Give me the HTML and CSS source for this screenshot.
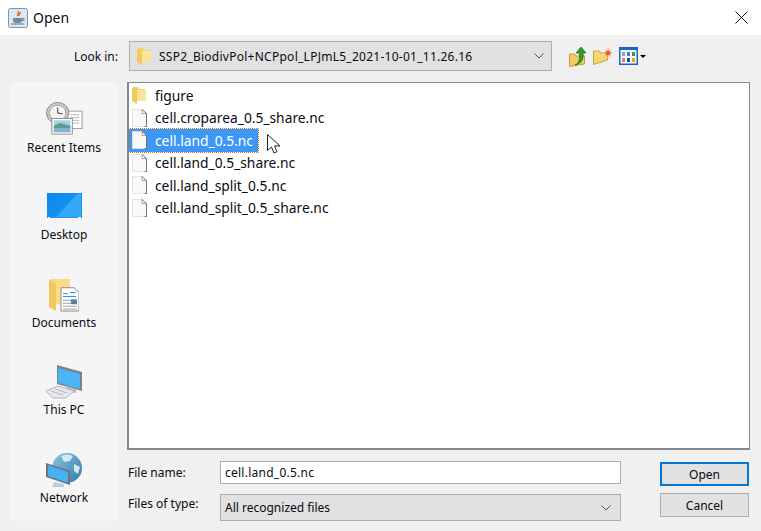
FILE: index.html
```html
<!DOCTYPE html>
<html lang="en">

<head>
  <meta charset="UTF-8" />
  <title>Open</title>
  <link rel="stylesheet" href="styles.css">
</head>

<body>
  <svg class="defs" width="0" height="0">
    <symbol id="page" viewBox="0 0 15 20" preserveAspectRatio="none">
      <path d="M.5.5h9.5l4.500 4.500v14.500h-14z" fill="#f9f9f9" stroke="#e2e2e2" />
      <path d="M10 .5v4.500h4.500" fill="#fff" stroke="#a0a0a0" />
      <path d="M10 .5l4.500 4.500v14.500h-2" fill="none" stroke="#6f6f6f" />
    </symbol>
    <symbol id="folder" viewBox="0 0 14 17">
      <path d="M1 0h5l1 2h6v12H1z" fill="#f5cf68" />
      <path d="M5 3h9v11H5z" fill="#fbe49d" />
      <path d="M0 1l5 2v14L0 14z" fill="#f3c95c" />
    </symbol>
    <linearGradient id="desk" x1="0" y1="0" x2="1" y2="1">
      <stop offset="0" stop-color="#0a86ea" />
      <stop offset="1" stop-color="#1c9cf5" />
    </linearGradient>
    <linearGradient id="globe" x1="0" y1="0" x2="1" y2="1">
      <stop offset="0" stop-color="#8fc4e0" />
      <stop offset="1" stop-color="#2f7aa8" />
    </linearGradient>
  </svg>

  <div class="dialog">
    <div class="titlebar">
      <div class="title_left">
        <svg class="java_icon" width="20" height="20" viewBox="0 0 20 20">
          <rect x=".5" y=".5" width="19" height="19" rx="2" fill="#dfe7ee" stroke="#7d93a8" />
          <path d="M10 3c2 2-2 3 0 5M12 4c1 2-2 2-1 4" fill="none" stroke="#d9642a" stroke-width="1.300" />
          <path d="M5 10h9v2q0 3-3 3H8q-3 0-3-3z" fill="#6f8ca6" />
          <path d="M14 10.500h2v2h-2M3 16h13" fill="none" stroke="#5b7890" />
        </svg>
        <span>Open</span>
      </div>
      <svg class="close_icon" width="13" height="13" viewBox="0 0 13 13">
        <path d="M.5.5l12 12M12.500.5l-12 12" stroke="#111" fill="none" />
      </svg>
    </div>

    <div class="content">
      <div class="look_row">
        <label class="look_label">Look in:</label>
        <div class="combo look_combo">
          <svg class="combo_folder" width="14" height="17"><use href="#folder" /></svg>
          <span class="look_text">SSP2_BiodivPol+NCPpol_LPJmL5_2021-10-01_11.26.16</span>
          <svg class="chevron" width="10" height="6" viewBox="0 0 10 6">
            <path d="M.5.500l4.500 4.500 4.500-4.500" fill="none" stroke="#555" />
          </svg>
        </div>
        <div class="toolbar">
          <svg width="17" height="21" viewBox="0 0 17 21">
            <path d="M.5 8h5l1 2h9v8l-15 2.500z" fill="#f0cb63" stroke="#c99a35" />
            <path d="M6 19c5-2 5-7 4-12H7l5-6 5 6h-3c1 6-2 11-8 12z" fill="#2f9a2a" stroke="#17701a" stroke-width=".7" />
          </svg>
          <svg width="20" height="17" viewBox="0 0 20 17">
            <path d="M.5 3h6l1 2h7v7l-14 4.500z" fill="#f6d772" stroke="#c9a13d" />
            <path d="M15 0v10M10 5h10M11.500 1.500l7 7M18.500 1.500l-7 7" stroke="#f6a684" />
            <circle cx="15" cy="5" r="2.500" fill="#ee5f1c" />
          </svg>
          <svg class="view_icon" width="19" height="18" viewBox="0 0 19 18">
            <rect width="19" height="18" fill="#1468c8" />
            <rect x="1.500" y="3" width="16" height="13.500" fill="#f4f7fb" />
            <path d="M3 5h3v4H3z" fill="#9a9ac4" />
            <path d="M8 5h3v4H8z" fill="#3f82c4" />
            <path d="M13 5h3v4h-3z" fill="#3a9a4a" />
            <path d="M3 11h3v4H3z" fill="#ee7d55" />
            <path d="M8 11h3v4H8z" fill="#1c4f9c" />
            <path d="M13 11h3v4h-3z" fill="#d9a52e" />
          </svg>
          <span class="caret"></span>
        </div>
      </div>

      <div class="main">
        <div class="sidebar">
          <div class="place">
            <svg class="icon_recent" width="37" height="33" viewBox="0 0 38 36" preserveAspectRatio="none">
              <rect x="22" y="10" width="15" height="19" fill="#fff" stroke="#9a9a9a" />
              <path d="M25 14h9M25 17h9M25 20h9M25 23h9" stroke="#a8b4c0" />
              <circle cx="12" cy="12" r="11.500" fill="#c9c9c9" stroke="#8a8a8a" />
              <circle cx="12" cy="12" r="8.500" fill="#f4f4f4" stroke="#a0a0a0" />
              <path d="M12 6v6l5 1" fill="none" stroke="#333" />
              <rect x="6" y="18" width="21" height="17" fill="#fff" stroke="#8a8a8a" />
              <rect x="8" y="20" width="17" height="13" fill="#a5d0ea" />
              <path d="M8 26l6-3 11 3v3H8z" fill="#5f9a8a" />
              <path d="M8 29h17v4H8z" fill="#7fb4cf" />
            </svg>
            <span>Recent Items</span>
          </div>
          <div class="place">
            <svg class="icon_desktop" width="35" height="25" viewBox="0 0 35 25">
              <rect width="35" height="25" fill="url(#desk)" />
              <path d="M9 24L30 1h4v23z" fill="#35a8f8" />
              <path d="M1 24.500h2M31 24.500h3" stroke="#e8f4ff" />
            </svg>
            <span>Desktop</span>
          </div>
          <div class="place">
            <svg width="30" height="33" viewBox="0 0 30 34" preserveAspectRatio="none">
              <path d="M1 0h20v26H1z" fill="#f9dc88" />
              <path d="M0 1l7 4v28l-7-4z" fill="#f2c75c" />
              <path d="M12 9h13l5 5v19H12z" fill="#fff" stroke="#8a8a8a" />
              <path d="M14 15h5M21 14h6M14 18h13" stroke="#2e8fd0" />
              <path d="M14 22h14M14 25h8M14 28h14M14 31h14" stroke="#9aa2aa" />
              <rect x="22" y="21" width="6" height="5" fill="#5a7f9f" />
            </svg>
            <span>Documents</span>
          </div>
          <div class="place">
            <svg width="36" height="34" viewBox="0 0 36 34">
              <path d="M11 0l25 7v19l-25-7z" fill="#7a838c" />
              <path d="M12 3l22 6v15l-22-6z" fill="#4db5f5" />
              <path d="M20 21l10 3v4l-10-2z" fill="#b5bcc2" />
              <path d="M0 26l12-5 16 5-8 7H7z" fill="#e6e8ea" stroke="#b4b8bc" />
              <path d="M5 26l12 4M9 24l12 4" stroke="#b4b8bc" />
            </svg>
            <span>This PC</span>
          </div>
          <div class="place">
            <svg width="36" height="34" viewBox="0 0 36 34">
              <circle cx="21" cy="15" r="15" fill="url(#globe)" />
              <path d="M15 3q6-3 12 0l-3 5-6 1zM28 11l6 3-2 7-4-3z" fill="#d4e6f0" />
              <path d="M0 10l24 8v14L0 24z" fill="#6b747c" />
              <path d="M2 12l20 7v11L2 23z" fill="#45b2f2" />
              <path d="M8 29l10 2v3H6z" fill="#c8ccd0" />
            </svg>
            <span>Network</span>
          </div>
        </div>

        <div class="right_col">
          <div class="file_list">
            <div class="file_row"><svg class="row_icon folder_icon" width="14" height="17"><use href="#folder" /></svg><span class="file_name">figure</span></div>
            <div class="file_row"><svg class="row_icon" width="15" height="18"><use href="#page" /></svg><span class="file_name">cell.croparea_0.5_share.nc</span></div>
            <div class="file_row selected"><svg class="row_icon" width="15" height="18"><use href="#page" /></svg><span class="file_name">cell.land_0.5.nc</span></div>
            <div class="file_row"><svg class="row_icon" width="15" height="18"><use href="#page" /></svg><span class="file_name">cell.land_0.5_share.nc</span></div>
            <div class="file_row"><svg class="row_icon" width="15" height="18"><use href="#page" /></svg><span class="file_name">cell.land_split_0.5.nc</span></div>
            <div class="file_row"><svg class="row_icon" width="15" height="18"><use href="#page" /></svg><span class="file_name">cell.land_split_0.5_share.nc</span></div>

            <svg class="cursor" width="14" height="21" viewBox="0 0 14 21">
              <path d="M.5.500v16l4-3.500 2.500 6 3-1.300-2.500-5.700h5.500z" fill="#fff" stroke="#222" />
            </svg>
          </div>

          <div class="bottom">
            <div class="fields">
              <div class="field_row name_row">
                <label class="field_label">File name:</label>
                <div class="name_input">cell.land_0.5.nc</div>
              </div>
              <div class="field_row type_row">
                <label class="field_label">Files of type:</label>
                <div class="combo type_combo">
                  <span>All recognized files</span>
                  <svg class="chevron" width="10" height="6" viewBox="0 0 10 6">
                    <path d="M.5.500l4.500 4.500 4.500-4.500" fill="none" stroke="#555" />
                  </svg>
                </div>
              </div>
            </div>
            <div class="buttons">
              <div class="btn btn_default">Open</div>
              <div class="btn">Cancel</div>
            </div>
          </div>
        </div>
      </div>
    </div>
  </div>
</body>

</html>
```

FILE: styles.css
```css
body {
  margin: 0;
  font-family: "Noto Sans", sans-serif;
  font-size: 12px;
  color: #0a0a14;
  background-color: #f0f0f0;
  overflow: hidden;
}

.defs {
  position: absolute;
}

.dialog {
  width: 761px;
  height: 531px;
  display: flex;
  flex-direction: column;
}

.titlebar {
  height: 35px;
  flex: none;
  background-color: #fff;
  display: flex;
  justify-content: space-between;
  align-items: center;
  padding: 0 13px 0 8px;
}

.title_left {
  display: flex;
  align-items: center;
  gap: 5px;
  font-size: 14px;
}

.content {
  flex: 1;
  padding: 6px 11px 10px;
  display: flex;
  flex-direction: column;
  gap: 11px;
}

.look_row {
  height: 30px;
  display: flex;
  align-items: center;
}

.look_label {
  width: 107px;
  text-align: right;
  margin-right: 11px;
}

.combo {
  box-sizing: border-box;
  background-color: #e1e1e1;
  border: 1px solid #adadad;
  display: flex;
  align-items: center;
}

.look_combo {
  width: 423px;
  height: 30px;
  padding: 0 7px;
}

.combo_folder {
  flex: none;
  margin-right: 8px;
}

.look_text {
  flex: 1;
  letter-spacing: 0.26px;
}

.toolbar {
  display: flex;
  align-items: center;
  margin-left: 17px;
  gap: 7px;
}

.view_icon {
  margin-left: -1px;
}

.caret {
  width: 0;
  height: 0;
  margin-left: -5px;
  border-left: 3px solid transparent;
  border-right: 3px solid transparent;
  border-top: 3px solid #000;
}

.main {
  flex: 1;
  display: flex;
  gap: 10px;
}

.sidebar {
  width: 106px;
  background-color: #f5f5f5;
  display: flex;
  flex-direction: column;
  padding-top: 0.4px;
}

.place {
  box-sizing: border-box;
  height: 87.5px;
  padding-bottom: 14px;
  display: flex;
  flex-direction: column;
  align-items: center;
  justify-content: flex-end;
  gap: 2px;
}

.icon_recent {
  margin-bottom: 2px;
}

.icon_desktop {
  margin-bottom: 6px;
}

.right_col {
  flex: 1;
  display: flex;
  flex-direction: column;
}

.file_list {
  position: relative;
  box-sizing: border-box;
  height: 368px;
  background-color: #fff;
  border: 1px solid #828790;
  border-left-width: 2px;
  border-bottom-width: 2px;
  padding-top: 1px;
  font-size: 13.8px;
}

.file_row {
  height: 22.5px;
  display: flex;
  align-items: center;
  width: fit-content;
  padding-right: 5px;
  box-sizing: border-box;
}

.row_icon {
  flex: none;
  margin: 0 8px 0 3px;
}

.folder_icon {
  margin: 0 9px 0 3px;
}

.file_row.selected {
  background-color: #3d98f5;
  color: #fff;
  outline: 1px dotted #c96a14;
}

.cursor {
  position: absolute;
  left: 138px;
  top: 51px;
}

.bottom {
  flex: 1;
  display: flex;
  padding-left: 1px;
  padding-top: 11px;
  gap: 39px;
}

.fields {
  width: 493px;
}

.field_row {
  display: flex;
  align-items: center;
}

.field_label {
  width: 92px;
  flex: none;
}

.name_row {
  height: 23px;
  margin-bottom: 10px;
}

.name_input {
  box-sizing: border-box;
  flex: 1;
  height: 23px;
  line-height: 21px;
  padding: 0 4px;
  background-color: #fff;
  border: 1px solid #adadad;
  letter-spacing: 0.25px;
}

.type_row {
  height: 27px;
}

.type_row .field_label {
  align-self: flex-start;
  margin-top: 1px;
}

.type_combo {
  flex: 1;
  height: 27px;
  padding: 0 9px 0 4px;
  justify-content: space-between;
}

.buttons {
  width: 89px;
  padding-top: 1px;
  display: flex;
  flex-direction: column;
  gap: 7px;
}

.btn {
  box-sizing: border-box;
  height: 24px;
  background-color: #e1e1e1;
  border: 1px solid #adadad;
  display: flex;
  align-items: center;
  justify-content: center;
}

.btn_default {
  border: 2px solid #0078d7;
}
```
